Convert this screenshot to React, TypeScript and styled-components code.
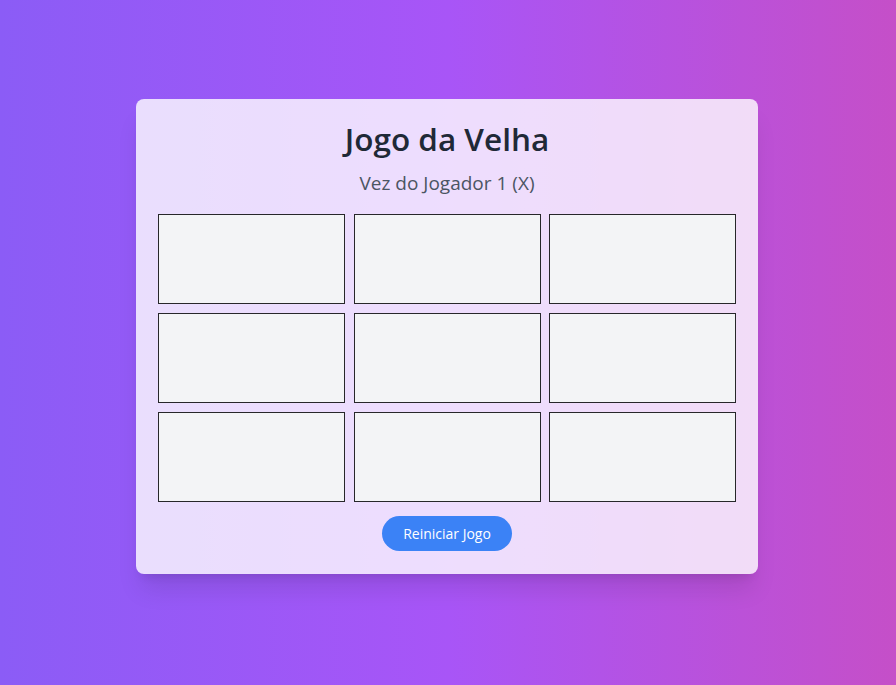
import React, { useState } from 'react'
import styled, { createGlobalStyle } from 'styled-components'

const GlobalStyle = createGlobalStyle`
    * {
        box-sizing: border-box;
    }
    body {
        margin: 0;
        font-family: "Open Sans", "Noto Sans", sans-serif;
    }
`

const Page = styled.main`
    min-height: 685px;
    display: flex;
    align-items: center;
    justify-content: center;
    padding: 0 2px 12px 0;
    background: linear-gradient(to right, #8b5cf6 0%, #a855f7 50%, #c54fc8 100%);
`

const Card = styled.section`
    width: 622px;
    padding: 22px 22px 23px;
    border-radius: 8px;
    background-color: rgba(255, 255, 255, 0.8);
    box-shadow: 0 20px 25px -5px rgba(0, 0, 0, 0.1), 0 8px 10px -6px rgba(0, 0, 0, 0.1);
    display: flex;
    flex-direction: column;
    align-items: center;
`

const Title = styled.h1`
    margin: 0;
    font-size: 31.5px;
    line-height: 36px;
    font-weight: 600;
    color: #1f2937;
`

const Status = styled.p`
    margin: 12px 0 17px;
    font-size: 19px;
    line-height: 28px;
    color: #4b5563;
`

const Board = styled.div`
    width: 100%;
    display: grid;
    grid-template-columns: repeat(3, 1fr);
    column-gap: 8.5px;
    row-gap: 9px;
`

const Cell = styled.button`
    height: 90px;
    padding: 0;
    border: 1px solid #27272a;
    background-color: #f3f4f6;
    font-family: inherit;
    font-size: 40px;
    font-weight: 700;
    color: #1f2937;
    cursor: pointer;
`

const ResetButton = styled.button`
    margin-top: 14px;
    height: 35px;
    padding: 0 21px;
    border: none;
    border-radius: 9999px;
    background-color: #3b82f6;
    color: #ffffff;
    font-family: inherit;
    font-size: 14px;
    font-weight: 500;
    cursor: pointer;

    &:hover {
        background-color: #2563eb;
    }
`

type Mark = 'X' | 'O' | null

export default function App() {
    const [cells, setCells] = useState<Mark[]>(Array(9).fill(null))
    const [xTurn, setXTurn] = useState(true)

    const play = (i: number) => {
        if (cells[i]) return
        const next = cells.slice()
        next[i] = xTurn ? 'X' : 'O'
        setCells(next)
        setXTurn(!xTurn)
    }

    const reset = () => {
        setCells(Array(9).fill(null))
        setXTurn(true)
    }

    return (
        <>
            <GlobalStyle />
            <Page>
                <Card>
                    <Title>Jogo da Velha</Title>
                    <Status>Vez do Jogador {xTurn ? '1 (X)' : '2 (O)'}</Status>
                    <Board>
                        {cells.map((c, i) => (
                            <Cell key={i} onClick={() => play(i)}>{c}</Cell>
                        ))}
                    </Board>
                    <ResetButton onClick={reset}>Reiniciar Jogo</ResetButton>
                </Card>
            </Page>
        </>
    )
}
